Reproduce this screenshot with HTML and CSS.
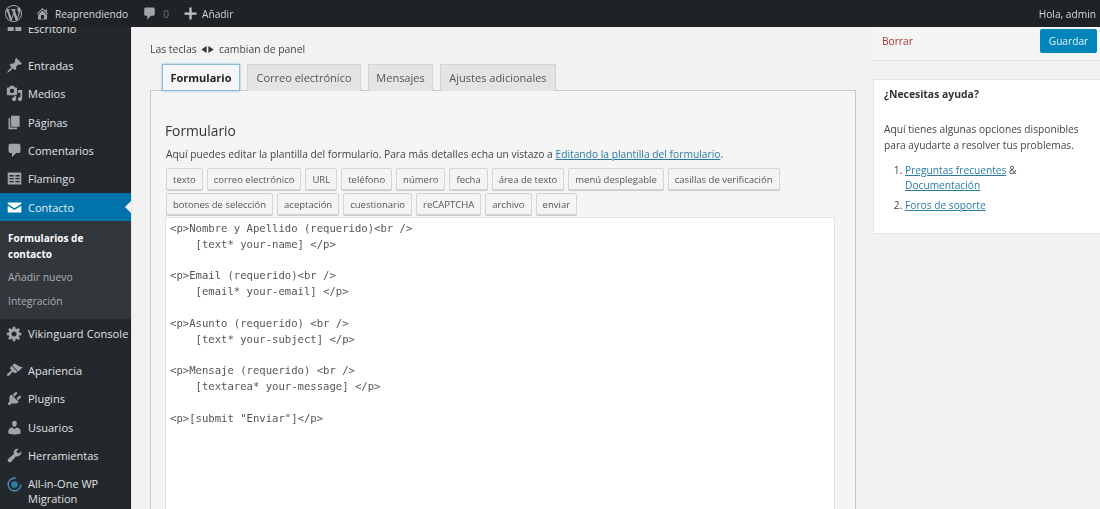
FILE: index.html
```html
<!DOCTYPE html>
<html lang="es">
<head>
<meta charset="utf-8">
<title>Formulario de contacto</title>
<link rel="stylesheet" href="styles.css">
</head>
<body>
<div class="app">
  <header class="topbar">
    <svg class="tb-logo" viewBox="0 0 20 20"><path d="M20 10c0-5.51-4.49-10-10-10C4.48 0 0 4.49 0 10c0 5.52 4.48 10 10 10 5.51 0 10-4.48 10-10zM7.78 15.37L4.37 6.22c.55-.02 1.17-.08 1.17-.08.5-.06.44-1.13-.06-1.11 0 0-1.45.11-2.37.11-.18 0-.37 0-.58-.01C4.12 2.69 6.87 1.11 10 1.11c2.33 0 4.45.87 6.05 2.34-.68-.11-1.65.39-1.65 1.58 0 .74.45 1.36.9 2.1.35.61.55 1.36.55 2.46 0 1.49-1.4 5-1.4 5l-3.03-8.37c.54-.02.82-.17.82-.17.5-.05.44-1.25-.06-1.22 0 0-1.44.12-2.38.12-.87 0-2.33-.12-2.33-.12-.5-.03-.56 1.2-.06 1.22l.92.08 1.26 3.41zM17.41 10c.24-.64.74-1.87.43-4.25.7 1.29 1.05 2.71 1.05 4.25 0 3.29-1.73 6.24-4.4 7.78.97-2.59 1.94-5.2 2.92-7.78zM6.1 18.09C3.12 16.65 1.11 13.53 1.11 10c0-1.3.23-2.48.72-3.59C3.25 10.3 4.67 14.2 6.1 18.09zm4.03-6.63l2.58 6.98c-.86.29-1.76.45-2.71.45-.79 0-1.57-.11-2.29-.33.81-2.38 1.62-4.74 2.42-7.1z"/></svg>
    <svg class="tb-icon tb-home" viewBox="0 0 20 20"><path d="M16 8.5l1.53 1.53-1.06 1.06L10 4.62l-6.47 6.47-1.06-1.06L10 2.5l4 4v-2h2v4zm-6-2.46l6 5.99V18H4v-5.97zM12 17v-5H8v5h4z"/></svg>
    <span class="tb-site">Reaprendiendo</span>
    <svg class="tb-icon tb-comment" viewBox="0 0 20 20"><path d="M5 2h10c1.1 0 2 .9 2 2v7c0 1.1-.9 2-2 2h-3l-5 5v-5H5c-1.1 0-2-.9-2-2V4c0-1.1.9-2 2-2z"/></svg>
    <span class="tb-count">0</span>
    <svg class="tb-icon tb-plus" viewBox="0 0 20 20"><path d="M8.5 2h3v6.500H18v3h-6.500V18h-3v-6.500H2v-3h6.500z"/></svg>
    <span class="tb-new">Añadir</span>
    <span class="tb-hello">Hola, admin</span>
  </header>

  <div class="body-row">
    <nav class="sidebar">
      <a class="item first"><svg class="mi" viewBox="0 0 20 20"><path d="M2 8h7v5H2zM11 8h7v5h-7z"/></svg><span>Escritorio</span></a>
      <a class="item sep"><svg class="mi" viewBox="0 0 20 20"><path d="M10.44 3.02l1.82-1.82 6.36 6.35-1.83 1.82c-1.05-.68-2.48-.57-3.41.36l-.75.75c-.92.93-1.04 2.35-.35 3.41l-1.83 1.82-2.41-2.41-2.8 2.79c-.42.42-3.38 2.71-3.8 2.29s1.86-3.39 2.28-3.81l2.79-2.79L4.1 9.36l1.83-1.82c1.05.69 2.48.57 3.4-.36l.75-.75c.93-.92 1.05-2.35.36-3.41z"/></svg><span>Entradas</span></a>
      <a class="item"><svg class="mi" viewBox="0 0 20 20"><path d="M13 11V4c0-.55-.45-1-1-1h-1.670L9 1H5L3.670 3H2c-.55 0-1 .45-1 1v7c0 .55.45 1 1 1h10c.55 0 1-.45 1-1zM7 4.500c1.380 0 2.500 1.120 2.500 2.500S8.380 9.500 7 9.500 4.500 8.380 4.500 7 5.620 4.500 7 4.500zM14 6h5v10.500c0 1.380-1.120 2.500-2.500 2.500S14 17.880 14 16.500s1.120-2.500 2.500-2.500c.17 0 .34.02.5.05V9h-3V6zm-4 8.050V13h2v3.500c0 1.380-1.120 2.500-2.500 2.500S7 17.880 7 16.500 8.120 14 9.500 14c.17 0 .34.02.5.05z"/></svg><span>Medios</span></a>
      <a class="item"><svg class="mi" viewBox="0 0 20 20"><path d="M6 15V2h10v13H6zm-1 1h8v2H3V5h2v11z"/></svg><span>Páginas</span></a>
      <a class="item"><svg class="mi" viewBox="0 0 20 20"><path d="M5 2h10c1.100 0 2 .9 2 2v7c0 1.100-.9 2-2 2h-3l-5 5v-5H5c-1.100 0-2-.9-2-2V4c0-1.100.9-2 2-2z"/></svg><span>Comentarios</span></a>
      <a class="item"><svg class="mi" viewBox="0 0 20 20"><path fill-rule="evenodd" d="M2 3h16v14H2zM4 6v1.500h5V6zM11 6v1.500h5V6zM4 9.500V11h5V9.500zM11 9.500V11h5V9.500zM4 13v1.500h5V13zM11 13v1.500h5V13z"/></svg><span>Flamingo</span></a>
      <a class="item active"><svg class="mi" viewBox="0 0 20 20"><path d="M2 4h16v2l-8 5-8-5zM2 8l8 5 8-5v8H2z"/></svg><span>Contacto</span></a>
      <div class="submenu">
        <a class="sub current">Formularios de contacto</a>
        <a class="sub">Añadir nuevo</a>
        <a class="sub">Integración</a>
      </div>
      <a class="item"><svg class="mi" viewBox="0 0 20 20"><path d="M18 12h-2.180c-.17.7-.44 1.350-.81 1.930l1.540 1.540-2.100 2.100-1.540-1.540c-.58.36-1.230.63-1.910.79V19H8v-2.180c-.68-.16-1.330-.43-1.910-.79l-1.540 1.540-2.120-2.120 1.540-1.540c-.36-.58-.63-1.230-.79-1.910H1V9.030h2.170c.16-.7.44-1.350.8-1.940L2.430 5.550l2.100-2.100 1.540 1.540c.58-.37 1.240-.64 1.930-.81V2h3v2.180c.68.16 1.330.43 1.910.79l1.540-1.540 2.120 2.120-1.540 1.540c.36.59.64 1.240.8 1.940H18V12zm-8.500 1.500c1.660 0 3-1.340 3-3s-1.340-3-3-3-3 1.340-3 3 1.340 3 3 3z"/></svg><span class="wide">Vikinguard Console</span></a>
      <a class="item sep"><svg class="mi" viewBox="0 0 20 20"><path d="M14.480 11.060L7.410 3.990l1.500-1.500c.5-.56 2.300-.47 3.510.32 1.210.8 1.430 1.280 2.910 2.100 1.180.64 2.450 1.260 4.450.85zm-.71.71L6.700 4.700 4.930 6.470c-.39.39-.39 1.020 0 1.410l1.060 1.060c.39.39.39 1.030 0 1.420-.6.6-1.430 1.110-2.210 1.690-.35.26-.7.53-1.010.84C1.430 13.710.62 15.040 1.700 16.100c.86.86 2.200.04 3.060-.96.3-.31.57-.65.84-1 .59-.78 1.100-1.610 1.700-2.200.38-.4 1.020-.4 1.400 0l1.070 1.060c.39.39 1.020.39 1.410 0z"/></svg><span>Apariencia</span></a>
      <a class="item"><svg class="mi" viewBox="0 0 20 20"><path d="M13.110 4.360L9.870 7.600 8 5.730l3.240-3.240c.35-.34 1.050-.2 1.560.32.52.51.66 1.210.31 1.550zm-8 1.770l.91-1.120 9.010 9.010-1.190.84c-.71.71-2.630 1.160-3.820 1.160H6.140L4.900 17.260c-.59.59-1.540.59-2.120 0-.59-.58-.59-1.530 0-2.120l1.240-1.240v-3.880c0-1.130.4-3.190 1.090-3.890zm7.260 3.970l3.240-3.240c.34-.35 1.040-.21 1.550.31.52.51.66 1.210.31 1.550l-3.240 3.250z"/></svg><span>Plugins</span></a>
      <a class="item"><svg class="mi" viewBox="0 0 20 20"><path d="M10 9.250c-2.270 0-2.730-3.440-2.730-3.440C7 4.020 7.820 2 9.970 2c2.160 0 2.980 2.020 2.710 3.810 0 0-.41 3.440-2.680 3.440zm0 2.570L12.720 10c2.390 0 4.520 2.330 4.520 4.530v2.490s-3.650 1.130-7.240 1.130c-3.650 0-7.240-1.130-7.240-1.130v-2.490c0-2.250 1.940-4.480 4.470-4.480z"/></svg><span>Usuarios</span></a>
      <a class="item"><svg class="mi" viewBox="0 0 20 20"><path d="M16.680 9.770c-1.340 1.340-3.300 1.670-4.950.99l-5.410 6.520c-.99.99-2.590.99-3.580 0s-.99-2.590 0-3.570l6.520-5.420c-.68-1.650-.35-3.610.99-4.950 1.280-1.280 3.120-1.620 4.720-1.060l-2.890 2.890 2.820 2.820 2.860-2.870c.53 1.580.18 3.390-1.080 4.650z"/></svg><span>Herramientas</span></a>
      <a class="item multi"><svg class="mi" viewBox="0 0 20 20"><circle class="ring-out" cx="10" cy="10" r="7.500"/><circle class="ring-in" cx="10" cy="10" r="3.800"/></svg><span>All-in-One WP Migration</span></a>
    </nav>

    <main class="content">
      <div class="editor-col">
        <p class="hint">Las teclas <svg class="keys" viewBox="0 0 14 8"><path d="M6 0v8L0 4zM8 0v8l6-4z"/></svg> cambian de panel</p>
        <div class="tabs">
          <a class="tab on">Formulario</a>
          <a class="tab">Correo electrónico</a>
          <a class="tab">Mensajes</a>
          <a class="tab">Ajustes adicionales</a>
        </div>
        <section class="panel">
          <h2>Formulario</h2>
          <p class="desc">Aquí puedes editar la plantilla del formulario. Para más detalles echa un vistazo a <a class="link">Editando la plantilla del formulario</a>.</p>
          <div class="tags">
            <span class="tag">texto</span><span class="tag">correo electrónico</span><span class="tag">URL</span><span class="tag">teléfono</span><span class="tag">número</span><span class="tag">fecha</span><span class="tag">área de texto</span><span class="tag">menú desplegable</span><span class="tag">casillas de verificación</span><span class="tag">botones de selección</span><span class="tag">aceptación</span><span class="tag">cuestionario</span><span class="tag">reCAPTCHA</span><span class="tag">archivo</span><span class="tag">enviar</span>
          </div>
          <pre class="code">&lt;p&gt;Nombre y Apellido (requerido)&lt;br /&gt;
    [text* your-name] &lt;/p&gt;

&lt;p&gt;Email (requerido)&lt;br /&gt;
    [email* your-email] &lt;/p&gt;

&lt;p&gt;Asunto (requerido) &lt;br /&gt;
    [text* your-subject] &lt;/p&gt;

&lt;p&gt;Mensaje (requerido) &lt;br /&gt;
    [textarea* your-message] &lt;/p&gt;

&lt;p&gt;[submit "Enviar"]&lt;/p&gt;</pre>
        </section>
      </div>
      <aside class="side">
        <div class="savebox">
          <a class="del">Borrar</a>
          <a class="save">Guardar</a>
        </div>
        <div class="help">
          <h3>¿Necesitas ayuda?</h3>
          <p>Aquí tienes algunas opciones disponibles para ayudarte a resolver tus problemas.</p>
          <ol>
            <li><a class="link">Preguntas frecuentes</a> &amp; <a class="link">Documentación</a></li>
            <li><a class="link">Foros de soporte</a></li>
          </ol>
        </div>
      </aside>
    </main>
  </div>
</div>
</body>
</html>
```

FILE: styles.css
```css
* { box-sizing: border-box; }
html, body { margin: 0; height: 100%; overflow: hidden; }
body { background: #f2f2f2; color: #444; font-family: "Open Sans", "Liberation Sans", sans-serif; font-size: 10.2px; }
.app { width: 1100px; height: 509px; display: flex; flex-direction: column; overflow: hidden; filter: blur(0.3px); }

.topbar { position: relative; z-index: 5; flex: 0 0 27px; background: #1f2327; color: #d5d7d9; display: flex; align-items: center; font-size: 10.2px; padding-left: 5px; }
.topbar svg { fill: #a0a5aa; flex: none; }
.tb-logo { width: 17px; height: 17px; }
.tb-icon { width: 15px; height: 15px; }
.tb-home { margin-left: 13px; }
.tb-site { margin-left: 5px; }
.tb-comment { margin-left: 14px; }
.tb-count { margin-left: 6px; color: #74787c; }
.tb-plus { margin-left: 14px; fill: #c0c3c6 !important; }
.tb-new { margin-left: 4px; }
.tb-hello { margin-left: auto; padding-right: 4px; }

.body-row { flex: 1; display: flex; min-height: 0; }
.sidebar { flex: 0 0 132px; margin-top: -13px; background: #23282d; color: #e0e2e3; font-size: 11px; overflow: hidden; border-right: 1px solid #e4e4e4; }
.item { display: flex; align-items: center; height: 28.350px; padding-left: 6px; }
.item span { margin-left: 5px; white-space: nowrap; }
.item .wide { letter-spacing: 0.1px; }
.item.sep { margin-top: 9px; }
.mi { width: 17px; height: 17px; fill: #a0a5aa; flex: none; }
.item.active { position: relative; background: #0073aa; color: #e6f2f7; }
.item.active .mi { fill: #fff; }
.item.active::after { content: ""; position: absolute; right: 0; top: 8px; border: 6px solid transparent; border-right-color: #f2f2f2; border-left-width: 0; }
.item.multi { height: auto; align-items: flex-start; padding-top: 6px; }
.item.multi span { white-space: normal; line-height: 15.500px; width: 90px; }
.ring-out { fill: none; stroke: #3f8cb5; stroke-width: 1.800; stroke-dasharray: 36 11; }
.ring-in { fill: #2d7ea8; }
.submenu { background: #32373c; padding: 10px 0 8px 8px; height: 97.500px; color: #a9adb1; font-size: 10.400px; }
.sub { display: block; margin-bottom: 8px; line-height: 15.500px; }
.sub.current { color: #fff; font-size: 10px; font-weight: 700; width: 100px; }

.content { flex: 1; min-width: 0; display: flex; gap: 17px; padding-left: 18px; overflow: hidden; }
.editor-col { flex: 0 0 706px; }
.hint { margin: 15px 0 0; line-height: 14px; font-size: 10.400px; }
.keys { width: 13px; height: 7px; fill: #333; margin: 0 2px; }
.tabs { display: grid; grid-template-columns: 78px 114px 65px 116px; gap: 7px; margin: 8px 0 -1px 12px; position: relative; z-index: 1; }
.tab { height: 27px; line-height: 26px; text-align: center; font-size: 11px; background: #e4e4e4; border: 1px solid #d4d4d4; border-bottom: 0; color: #555; white-space: nowrap; }
.tab.on { background: #f5f5f5; color: #222; font-weight: 700; border: 1px solid #8fbcd8; box-shadow: 0 0 2px #7fb3d3; }
.panel { border: 1px solid #c9c9c9; background: #f5f5f5; padding: 30px 20px 0 14px; height: 430px; }
.panel h2 { margin: 0; font-size: 13.800px; font-weight: 400; line-height: 20px; color: #333; }
.desc { margin: 6px 0 0 1px; font-size: 10.250px; line-height: 15px; color: #444; white-space: nowrap; }
.link { color: #2a7ba6; text-decoration: underline; }
.tags { display: flex; flex-wrap: wrap; gap: 3px 4px; margin: 6px 0 0 1px; }
.tag { height: 22px; padding: 0 6px; line-height: 21px; font-size: 9.500px; color: #555; background: #f4f4f4; border: 1px solid #d5d5d5; border-radius: 2px; box-shadow: 0 1px 0 #ccc; white-space: nowrap; }
.code { margin: 2px 0 0; height: 400px; width: 670px; background: #fff; border: 1px solid #e2e2e2; padding: 3px 4px; font-family: "DejaVu Sans Mono", "Liberation Mono", monospace; font-size: 10.600px; line-height: 15.800px; color: #555; }

.side { flex: 0 0 227px; min-width: 0; display: flex; flex-direction: column; }
.savebox { height: 34px; background: #f5f5f5; border-bottom: 1px solid #e0e0e0; display: flex; justify-content: space-between; padding: 2px 3px 0 9px; }
.del { color: #a33; line-height: 24px; }
.save { width: 57px; height: 24px; border-radius: 2px; background: #0085ba; color: #e8f3f8; text-align: center; line-height: 24px; }
.help { margin-top: 18px; height: 155px; background: #fff; border: 1px solid #e5e5e5; border-right: 0; padding: 7px 10px; }
.help h3 { margin: 0; font-size: 10.400px; font-weight: 700; line-height: 15px; color: #333; }
.help p { margin: 19px 0 0; line-height: 16px; color: #444; }
.help ol { margin: 10px 0 0; padding-left: 21px; line-height: 15px; }
.help li { margin-bottom: 5px; width: 150px; }
```
